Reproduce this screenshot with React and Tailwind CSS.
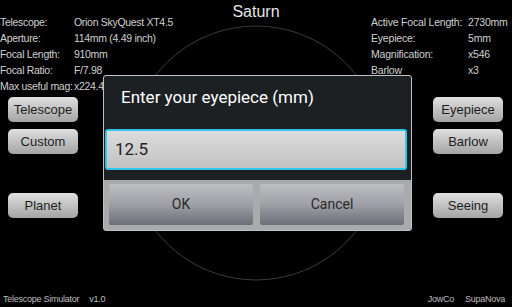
import React from 'react'

const leftInfo = [
  ['Telescope:', 'Orion SkyQuest XT4.5'],
  ['Aperture:', '114mm (4.49 inch)'],
  ['Focal Length:', '910mm'],
  ['Focal Ratio:', 'F/7.98'],
  ['Max useful mag:', 'x224.4'],
]

const rightInfo = [
  ['Active Focal Length:', '2730mm'],
  ['Eyepiece:', '5mm'],
  ['Magnification:', 'x546'],
  ['Barlow', 'x3'],
]

const SideButton = ({ children }) => (
  <button className="h-[25px] w-[70px] rounded-[5px] bg-gradient-to-b from-[#e0e0e0] to-[#a4a4a4] text-[13px] text-[#1e1e1e] leading-none">
    {children}
  </button>
)

const DialogButton = ({ children }) => (
  <button className="flex-1 h-[41px] rounded-[2px] bg-gradient-to-b from-[#bcbec2] via-[#9ea0a6] to-[#6c6f77] text-[14px] text-[#2a2a2a] font-['Roboto',sans-serif]">
    {children}
  </button>
)

const App = () => {
  return (
    <div className="relative w-[512px] h-[307px] bg-black overflow-hidden font-['Liberation_Sans',Arial,sans-serif] text-[#d0d0d0]">
      {/* Planet outline */}
      <svg className="absolute inset-0" width="512" height="307">
        <circle cx="256" cy="153" r="127" fill="none" stroke="#3c3c3c" strokeWidth="1" />
      </svg>

      <div className="relative flex flex-col h-full">
        {/* Header */}
        <div className="grid grid-cols-[200px_112px_200px]">
          <div className="pt-[14px] text-[10.5px] leading-[16px] tracking-[-0.3px]">
            {leftInfo.map(([k, v]) => (
              <div key={k} className="flex">
                <span className="w-[74px] whitespace-nowrap">{k}</span>
                <span className="whitespace-nowrap">{v}</span>
              </div>
            ))}
          </div>
          <div className="text-center text-[16px] text-[#e6e6e6] pt-[3px] leading-[18px]">Saturn</div>
          <div className="pt-[14px] pl-[59px] text-[10.5px] leading-[16px] tracking-[-0.2px]">
            {rightInfo.map(([k, v]) => (
              <div key={k} className="flex">
                <span className="w-[97px] whitespace-nowrap">{k}</span>
                <span className="whitespace-nowrap">{v}</span>
              </div>
            ))}
          </div>
        </div>

        {/* Side buttons */}
        <div className="flex justify-between pl-[8px] pr-[9px] mt-[3px]">
          <div className="flex flex-col">
            <SideButton>Telescope</SideButton>
            <div className="mt-[7px]"><SideButton>Custom</SideButton></div>
            <div className="mt-[39px]"><SideButton>Planet</SideButton></div>
          </div>
          <div className="flex flex-col">
            <SideButton>Eyepiece</SideButton>
            <div className="mt-[7px]"><SideButton>Barlow</SideButton></div>
            <div className="mt-[39px]"><SideButton>Seeing</SideButton></div>
          </div>
        </div>

        {/* Footer */}
        <div className="mt-auto flex justify-between px-[3px] pb-[2px] text-[9px] leading-[12px] text-[#bdbdbd] tracking-[-0.25px]">
          <div className="flex gap-[10px]">
            <span>Telescope Simulator</span>
            <span>v1.0</span>
          </div>
          <div className="flex gap-[11px] pr-[4px]">
            <span>JowCo</span>
            <span>SupaNova</span>
          </div>
        </div>
      </div>

      {/* Eyepiece dialog */}
      <div className="absolute left-[103px] top-[75px] w-[309px] h-[156px] rounded-[3px] border border-[#bfc1c4] bg-[#a9aaac] flex flex-col overflow-hidden font-['Roboto',sans-serif]">
        <div className="bg-[#1c2023] h-[104px] flex flex-col">
          <div className="h-[44px] flex items-center pl-[17px] text-[17px] text-white">
            Enter your eyepiece (mm)
          </div>
          <div className="mt-[9px] ml-[1px] mr-[4px] h-[41px] rounded-[3px] border-2 border-[#31c6ea] bg-gradient-to-b from-[#dcdcdc] to-[#c2c2c2] flex items-center pl-[8px] text-[17px] text-[#222]">
            12.5
          </div>
        </div>
        <div className="flex gap-[7px] pl-[5px] pr-[7px] pt-[4px]">
          <DialogButton>OK</DialogButton>
          <DialogButton>Cancel</DialogButton>
        </div>
      </div>
    </div>
  )
}

export default App
